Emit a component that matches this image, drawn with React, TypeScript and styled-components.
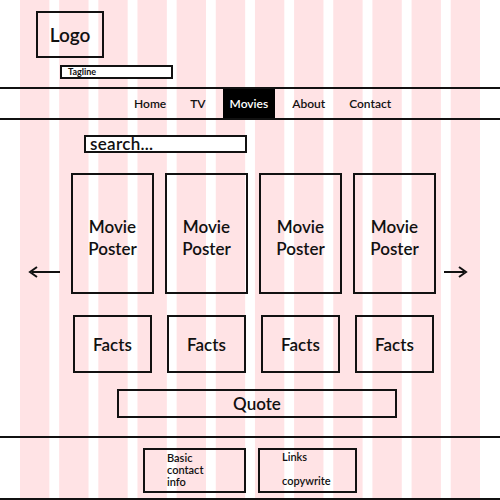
import React from "react";
import styled, { createGlobalStyle } from "styled-components";

const GlobalStyle = createGlobalStyle`
    html, body {
        margin: 0;
        padding: 0;
        background: #ffffff;
    }
    body {
        font-family: "Lato", "Noto Sans", "Liberation Sans", sans-serif;
        color: #111111;
    }
`;

const Page = styled.div`
    position: relative;
    width: 500px;
    height: 500px;
    overflow: hidden;
    box-sizing: border-box;
    background-color: #ffffff;
    background-image: linear-gradient(to right, #ffe3e5 29.17px, transparent 29.17px);
    background-size: 39.17px 100%;
    background-repeat: repeat-x;
    background-origin: content-box;
    background-clip: content-box;
    padding: 0 20px;
`;

const Content = styled.div`
    margin: 0 -20px;
    display: flex;
    flex-direction: column;
    height: 500px;
`;

const Header = styled.header`
    display: flex;
    flex-direction: column;
    padding-top: 11px;
`;

const LogoBox = styled.div`
    margin-left: 36px;
    width: 68px;
    height: 47px;
    box-sizing: border-box;
    border: 2px solid #111;
    display: flex;
    align-items: center;
    justify-content: center;
    font-size: 19px;
    font-weight: 600;
`;

const Tagline = styled.div`
    margin-left: 60px;
    margin-top: 7px;
    width: 113px;
    height: 14px;
    box-sizing: border-box;
    border: 2px solid #111;
    background: #fff;
    padding-left: 6px;
    font-size: 9px;
    font-weight: 700;
    line-height: 10px;
`;

const Nav = styled.nav`
    margin-top: 8px;
    height: 33px;
    box-sizing: border-box;
    border-top: 2px solid #111;
    border-bottom: 2px solid #111;
    display: flex;
    align-items: stretch;
    gap: 10px;
    padding-left: 127px;
`;

const NavItem = styled.a<{ active?: boolean }>`
    display: flex;
    align-items: center;
    padding: 0 7px;
    font-size: 12px;
    font-weight: 600;
    color: ${(p) => (p.active ? "#fff" : "#111")};
    background: ${(p) => (p.active ? "#000" : "transparent")};
    text-decoration: none;
`;

const Search = styled.div`
    margin: 15px 0 0 84px;
    width: 163px;
    height: 18px;
    box-sizing: border-box;
    border: 2px solid #111;
    background: #fff;
    padding-left: 4px;
    font-size: 17px;
    font-weight: 600;
    letter-spacing: 0.3px;
    line-height: 13px;
`;

const Carousel = styled.section`
    margin-top: 20px;
    padding-left: 28px;
    display: grid;
    grid-template-columns: 32px repeat(4, 83px) 24px;
    grid-template-rows: 121px 58px;
    column-gap: 11px;
    row-gap: 21px;
`;

const Arrow = styled.svg<{ side: "left" | "right" }>`
    grid-row: 1;
    grid-column: ${(p) => (p.side === "left" ? 1 : 6)};
    align-self: end;
    margin-bottom: 16px;
    margin-left: ${(p) => (p.side === "right" ? "-3px" : "0")};
`;

const Poster = styled.div<{ col: number }>`
    grid-row: 1;
    grid-column: ${(p) => p.col};
    box-sizing: border-box;
    border: 2px solid #111;
    display: flex;
    align-items: center;
    justify-content: center;
    text-align: center;
    padding-top: 8px;
    font-size: 17px;
    font-weight: 600;
    line-height: 22px;
`;

const Facts = styled.div<{ col: number }>`
    grid-row: 2;
    grid-column: ${(p) => p.col};
    width: 79px;
    justify-self: center;
    box-sizing: border-box;
    border: 2px solid #111;
    display: flex;
    align-items: center;
    justify-content: center;
    font-size: 17px;
    font-weight: 600;
`;

const Quote = styled.div`
    margin: 16px 0 0 117px;
    width: 280px;
    height: 29px;
    box-sizing: border-box;
    border: 2px solid #111;
    display: flex;
    align-items: center;
    justify-content: center;
    font-size: 17px;
    font-weight: 600;
`;

const Footer = styled.footer`
    margin-top: 18px;
    flex: 1;
    box-sizing: border-box;
    border-top: 2px solid #111;
    border-bottom: 2px solid #111;
    display: flex;
    gap: 12px;
    padding: 10px 0 0 143px;
`;

const FooterBox = styled.div<{ w: number }>`
    width: ${(p) => p.w}px;
    height: 45px;
    box-sizing: border-box;
    border: 2px solid #111;
    display: flex;
    flex-direction: column;
    justify-content: space-between;
    padding: 1px 0 4px 22px;
    font-size: 11px;
    font-weight: 600;
    line-height: 12px;
`;

const ContactText = styled.div`
    padding-top: 1px;
`;

const columns = [2, 3, 4, 5];

function ArrowIcon({ side }: { side: "left" | "right" }) {
    const w = side === "left" ? 32 : 24;
    return (
        <Arrow side={side} width={w} height={12} viewBox={`0 0 ${w} 12`}>
            {side === "left" ? (
                <>
                    <line x1="4" y1="6" x2="32" y2="6" stroke="#111" strokeWidth="2" />
                    <path d="M9 1 L2 6 L9 11" fill="none" stroke="#111" strokeWidth="2" />
                </>
            ) : (
                <>
                    <line x1="0" y1="6" x2="20" y2="6" stroke="#111" strokeWidth="2" />
                    <path d="M15 1 L22 6 L15 11" fill="none" stroke="#111" strokeWidth="2" />
                </>
            )}
        </Arrow>
    );
}

function App() {
    return (
        <>
            <GlobalStyle />
            <Page>
                <Content>
                    <Header>
                        <LogoBox>Logo</LogoBox>
                        <Tagline>Tagline</Tagline>
                    </Header>
                    <Nav>
                        <NavItem>Home</NavItem>
                        <NavItem>TV</NavItem>
                        <NavItem active>Movies</NavItem>
                        <NavItem>About</NavItem>
                        <NavItem>Contact</NavItem>
                    </Nav>
                    <Search>search...</Search>
                    <Carousel>
                        <ArrowIcon side="left" />
                        {columns.map((c) => (
                            <Poster key={"p" + c} col={c}>
                                Movie
                                <br />
                                Poster
                            </Poster>
                        ))}
                        <ArrowIcon side="right" />
                        {columns.map((c) => (
                            <Facts key={"f" + c} col={c}>Facts</Facts>
                        ))}
                    </Carousel>
                    <Quote>Quote</Quote>
                    <Footer>
                        <FooterBox w={103}>
                            <ContactText>
                                Basic
                                <br />
                                contact
                                <br />
                                info
                            </ContactText>
                        </FooterBox>
                        <FooterBox w={99}>
                            <div>Links</div>
                            <div>copywrite</div>
                        </FooterBox>
                    </Footer>
                </Content>
            </Page>
        </>
    );
}

export default App;
